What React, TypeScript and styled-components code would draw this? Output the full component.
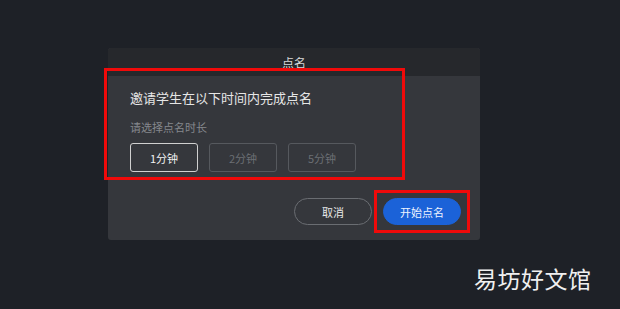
import React, { useState } from "react";
import styled, { createGlobalStyle } from "styled-components";

const Global = createGlobalStyle`
  html, body { margin: 0; padding: 0; background: #1e2127; }
  body { font-family: "Noto Sans CJK SC", "Noto Sans", sans-serif; }
`;

const Page = styled.div`
  position: relative;
  width: 620px;
  height: 309px;
  background: #1e2127;
  overflow: hidden;
  display: flex;
  align-items: flex-start;
  padding: 48px 0 0 108px;
  box-sizing: border-box;
`;

const Dialog = styled.div`
  width: 372px;
  height: 192px;
  background: #35373c;
  border-radius: 3px;
  display: flex;
  flex-direction: column;
  overflow: hidden;
`;

const Header = styled.div`
  height: 28px;
  background: #26282c;
  color: #d8d8d8;
  font-size: 12px;
  display: flex;
  align-items: center;
  justify-content: center;
`;

const Body = styled.div`
  flex: 1;
  display: flex;
  flex-direction: column;
  padding: 13px 19px 15px 22px;
`;

const Title = styled.div`
  font-size: 13px;
  line-height: 18px;
  color: #e6e6e6;
`;

const Sub = styled.div`
  margin-top: 12px;
  font-size: 11px;
  line-height: 16px;
  color: #85888d;
`;

const Options = styled.div`
  margin-top: 8px;
  display: flex;
  gap: 11px;
`;

const Option = styled.button<{ $active: boolean }>`
  width: 68px;
  height: 29px;
  box-sizing: border-box;
  border-radius: 3px;
  background: transparent;
  border: 1px solid ${(p) => (p.$active ? "#d0d0d0" : "#56595e")};
  color: ${(p) => (p.$active ? "#f2f2f2" : "#6c6f74")};
  font-family: inherit;
  font-size: 11px;
  padding: 0;
  cursor: pointer;
`;

const Footer = styled.div`
  margin-top: auto;
  display: flex;
  justify-content: flex-end;
  gap: 11px;
`;

const Pill = styled.button<{ $primary?: boolean }>`
  width: 78px;
  height: 27px;
  box-sizing: border-box;
  border-radius: 14px;
  font-family: inherit;
  font-size: 11px;
  padding: 0;
  background: ${(p) => (p.$primary ? "#1b62d8" : "transparent")};
  border: 1px solid ${(p) => (p.$primary ? "#1b62d8" : "#6a6d72")};
  color: ${(p) => (p.$primary ? "#eef3ff" : "#e8e8e8")};
`;

const Mark = styled.div<{ $l: number; $t: number; $w: number; $h: number }>`
  position: absolute;
  left: ${(p) => p.$l}px;
  top: ${(p) => p.$t}px;
  width: ${(p) => p.$w}px;
  height: ${(p) => p.$h}px;
  border: 3px solid #f00a0a;
  box-sizing: border-box;
  pointer-events: none;
`;

const Watermark = styled.div`
  position: absolute;
  left: 474px;
  top: 262px;
  font-size: 23px;
  line-height: 32px;
  color: #f0f0f0;
  letter-spacing: 0.5px;
`;

export default function App() {
  const [sel, setSel] = useState(0);
  const opts = ["1分钟", "2分钟", "5分钟"];
  return (
    <>
      <Global />
      <Page>
        <Dialog>
          <Header>点名</Header>
          <Body>
            <Title>邀请学生在以下时间内完成点名</Title>
            <Sub>请选择点名时长</Sub>
            <Options>
              {opts.map((o, i) => (
                <Option key={o} $active={i === sel} onClick={() => setSel(i)}>
                  {o}
                </Option>
              ))}
            </Options>
            <Footer>
              <Pill>取消</Pill>
              <Pill $primary>开始点名</Pill>
            </Footer>
          </Body>
        </Dialog>
        <Mark $l={104} $t={68} $w={301} $h={112} />
        <Mark $l={374} $t={190} $w={96} $h={43} />
        <Watermark>易坊好文馆</Watermark>
      </Page>
    </>
  );
}
